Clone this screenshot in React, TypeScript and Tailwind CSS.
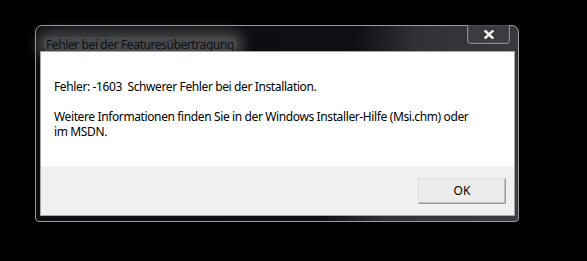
export default function App() {
  return (
    <div className="h-[261px] w-[587px] bg-black pt-[25px] pl-[35px] font-['Noto_Sans',sans-serif]">
      <div className="flex h-[197px] w-[484px] flex-col rounded-t-[7px] rounded-b-[4px] border border-[#9a9a9a] bg-[linear-gradient(100deg,#0b0d10_0%,#0d0f12_62%,#2f3134_74%,#3a3c3f_100%)] pr-[3px] pb-[5px] pl-[4px]">
        {/* title bar */}
        <div className="flex h-[25px] items-start">
          <div className="flex-1 pt-[5px] pl-[3px]">
            <span className="inline-block rounded-[12px] bg-[rgba(160,160,160,0.4)] px-[3px] text-[12px] leading-[15px] tracking-[-0.4px] text-[#101018] shadow-[0_0_12px_7px_rgba(150,150,150,0.38)]">
              Fehler bei der Featuresübertragung
            </span>
          </div>
          <div className="-mt-px mr-[5px] flex h-[19px] w-[43px] items-center justify-center rounded-b-[4px] border border-t-0 border-[#8a8a8a] bg-[#3a3c3f] shadow-[inset_0_0_0_1px_#4c4e51]">
            <svg width="10" height="9" viewBox="0 0 10 9">
              <path d="M1.5 1.2 L8.5 7.8 M8.5 1.2 L1.5 7.8" stroke="#f4f4f4" strokeWidth="2.4" strokeLinecap="square" />
            </svg>
          </div>
        </div>
        {/* client area */}
        <div className="flex flex-1 flex-col border border-[#a5a5a5]">
          <div className="h-[114px] bg-white pt-[27px] pl-[13px] text-[12px] leading-[15px] tracking-[-0.38px] text-black">
            <p className="whitespace-pre">Fehler: -1603  Schwerer Fehler bei der Installation.</p>
            <p className="mt-[15px]">Weitere Informationen finden Sie in der Windows Installer-Hilfe (Msi.chm) oder</p>
            <p>im MSDN.</p>
          </div>
          <div className="flex flex-1 items-center justify-end bg-[#f0f0f0] pr-[8px]">
            <button className="h-[26px] w-[88px] border border-t-[#e0e0e0] border-l-[#e0e0e0] border-r-[#9a9a9a] border-b-[#9a9a9a] bg-[#ececec] text-[12px] leading-[15px] text-black shadow-[inset_-1px_-1px_0_#c4c4c4]">
              OK
            </button>
          </div>
        </div>
      </div>
    </div>
  );
}
